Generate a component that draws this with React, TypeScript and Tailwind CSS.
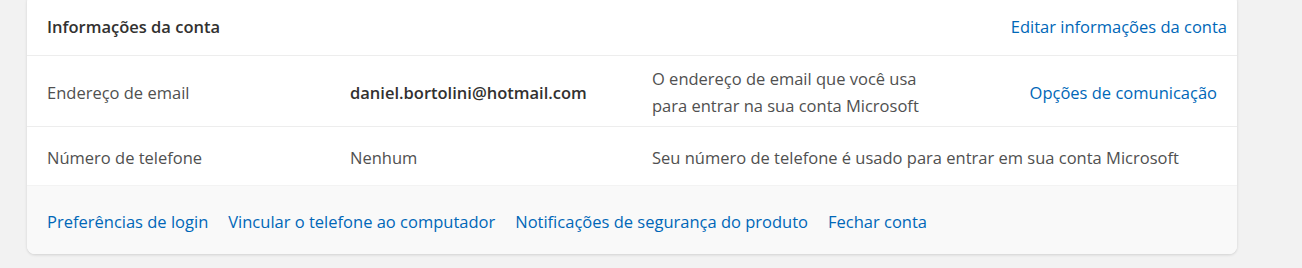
const font = { fontFamily: '"Open Sans", "Noto Sans", sans-serif' };

const links = [
  "Preferências de login",
  "Vincular o telefone ao computador",
  "Notificações de segurança do produto",
  "Fechar conta",
];

export default function App() {
  return (
    <div className="w-[1302px] h-[268px] bg-[#f2f2f2] overflow-hidden" style={font}>
      <div className="ml-[27px] -mt-[6px] w-[1210px] bg-white rounded-lg shadow-[0_1px_3px_rgba(0,0,0,0.14)] overflow-hidden text-[16.5px]">
        <div className="h-[62px] pt-[6px] flex items-center justify-between pl-5 pr-[10px] border-b border-[#ededed]">
          <h2 className="font-semibold text-[#323130]">Informações da conta</h2>
          <a className="text-[#0067b8]">Editar informações da conta</a>
        </div>

        <div className="grid grid-cols-[303px_302px_1fr_auto] items-center px-5 pt-[9px] pb-[7px] border-b border-[#ededed] text-[#505050]">
          <div className="pt-[2px]">Endereço de email</div>
          <div className="pt-[2px] font-semibold text-[#323130]">daniel.bortolini@hotmail.com</div>
          <div className="leading-[27px]">
            O endereço de email que você usa
            <br />
            para entrar na sua conta Microsoft
          </div>
          <a className="pt-[2px] text-[#0067b8]">Opções de comunicação</a>
        </div>

        <div className="grid grid-cols-[303px_302px_1fr] items-center h-[58px] pt-[4px] px-5 text-[#505050]">
          <div>Número de telefone</div>
          <div>Nenhum</div>
          <div>Seu número de telefone é usado para entrar em sua conta Microsoft</div>
        </div>

        <div className="h-[69px] pt-[4px] flex items-center gap-5 px-5 bg-[#f9f9f9] border-t border-[#f3f3f3]">
          {links.map((l) => (
            <a key={l} className="text-[#0067b8]">
              {l}
            </a>
          ))}
        </div>
      </div>
    </div>
  );
}
